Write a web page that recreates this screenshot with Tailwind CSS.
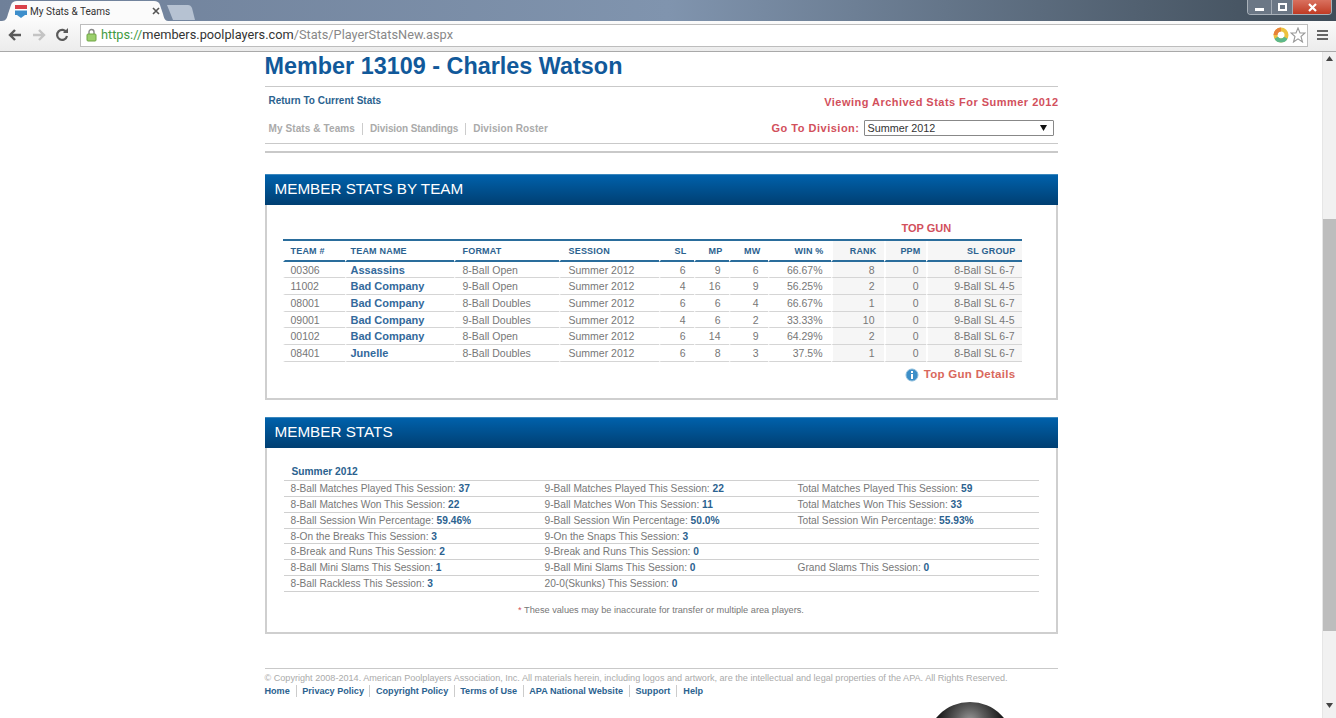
<!DOCTYPE html>
<html lang="en">
<head>
  <meta charset="UTF-8">
  <script src="https://cdn.jsdelivr.net/npm/@tailwindcss/browser@4"></script>
  <title>My Stats &amp; Teams</title>
</head>
<body class="h-[718px] overflow-hidden bg-white font-['Liberation_Sans',Arial,sans-serif]">
  <!-- browser chrome -->
  <div class="h-[21px] flex items-end bg-gradient-to-r from-[#6f8099] via-[#8094ae] to-[#3f4c58] relative">
    <div class="relative w-[166px] h-[20px] ml-[2px] flex items-center pl-[12px]">
      <svg class="absolute inset-0" width="166" height="20" viewBox="0 0 166 20"><path d="M0 20 C4 20 5 17 6 13 L9 4 C10 1 12 0 15 0 L152 0 C155 0 157 1 158 4 L161 13 C162 17 163 20 166 20 Z" fill="#fbfbfb"/></svg>
      <svg class="relative" width="14" height="14" viewBox="0 0 14 14"><rect x="1" y="1" width="12" height="5" fill="#d9414a"/><rect x="1" y="6" width="12" height="5" fill="#3d8ecb"/><path d="M3 11 H11 L7 14Z" fill="#3d8ecb"/><rect x="1" y="5" width="12" height="1.5" fill="#fff"/></svg>
      <span class="relative ml-[2px] text-[10px] text-[#333] font-['Roboto',sans-serif] w-[122px]">My Stats &amp; Teams</span>
      <svg class="relative" width="8" height="8" viewBox="0 0 8 8"><path d="M1 1L7 7M7 1L1 7" stroke="#555" stroke-width="1.6"/></svg>
    </div>
    <svg class="-ml-[1px] mb-[1px]" width="30" height="15" viewBox="0 0 30 15"><path d="M0 0 H21 C23 0 24 1 25 3 L28 15 H6 Z" fill="#b6c2d2"/></svg>
    <div class="absolute top-0 right-[4px] w-[85px] h-[15px] flex rounded-b-[4px] overflow-hidden border border-t-0 border-[#d5dbe0]/70">
      <div class="w-[24px] bg-[#6b7785] flex items-center justify-center border-r border-[#c8ced4]/60"><div class="w-[9px] h-[3px] mt-[5px] bg-white"></div></div>
      <div class="w-[21px] bg-[#6b7785] flex items-center justify-center border-r border-[#c8ced4]/60"><div class="w-[9px] h-[8px] border-2 border-white"></div></div>
      <div class="flex-1 bg-gradient-to-b from-[#d9705e] to-[#c03a22] flex items-center justify-center"><svg width="9" height="9" viewBox="0 0 9 9"><path d="M1 1L8 8M8 1L1 8" stroke="#fff" stroke-width="2.2"/></svg></div>
    </div>
  </div>
  <div class="h-[31px] flex items-center bg-gradient-to-b from-[#fafafa] to-[#ececec] border-b border-[#a9a9a9] pb-[2px]">
    <div class="w-[80px] flex items-center shrink-0">
      <svg class="ml-[8px]" width="14" height="12" viewBox="0 0 14 12"><path d="M7 1L2 6L7 11M2 6H13" fill="none" stroke="#5a5a5a" stroke-width="2.4"/></svg>
      <svg class="ml-[10px]" width="14" height="12" viewBox="0 0 14 12"><path d="M7 1L12 6L7 11M12 6H1" fill="none" stroke="#c4c4c4" stroke-width="2.4"/></svg>
      <svg class="ml-[9px]" width="14" height="14" viewBox="0 0 14 14"><path d="M11.5 4.5A5 5 0 1 0 12 8" fill="none" stroke="#5a5a5a" stroke-width="2.2"/><path d="M8 5H13V0Z" fill="#5a5a5a"/></svg>
    </div>
    <div class="w-[1228px] h-[23px] bg-white border border-[#bdbdbd] flex items-center pl-[5px] pr-[1px] shrink-0">
      <svg width="11" height="14" viewBox="0 0 11 14"><path d="M3 6V4A2.5 2.5 0 0 1 8 4V6" fill="none" stroke="#888" stroke-width="1.4"/><rect x="1" y="6" width="9" height="7" rx="1" fill="#9bcf6d" stroke="#6fa544"/></svg>
      <span class="ml-[4px] text-[12.75px] font-['Roboto',sans-serif] text-[#888] whitespace-nowrap"><span class="text-[#3f9b3f]">https://</span><span class="text-[#333]">members.poolplayers.com</span>/Stats/PlayerStatsNew.aspx</span>
      <svg class="ml-auto" width="16" height="16" viewBox="0 0 16 16"><circle cx="8" cy="8" r="5.5" fill="none" stroke="#ecc23f" stroke-width="4"/><path d="M3.2 10.8A5.5 5.5 0 0 0 12.8 10.8" fill="none" stroke="#5cb88a" stroke-width="4"/><path d="M2.5 8A5.5 5.5 0 0 1 8 2.5" fill="none" stroke="#e8823a" stroke-width="4"/></svg>
      <svg class="ml-[1px]" width="16" height="16" viewBox="0 0 16 16"><path d="M8 1L10 6H15L11 9.5L12.5 15L8 11.8L3.5 15L5 9.5L1 6H6Z" fill="#fff" stroke="#999" stroke-width="1.1"/></svg>
    </div>
    <div class="ml-[9px] w-[11px] flex flex-col gap-[2px]"><div class="h-[2px] bg-[#666]"></div><div class="h-[2px] bg-[#666]"></div><div class="h-[2px] bg-[#666]"></div></div>
  </div>

  <div class="flex h-[666px]">
    <main class="flex-1 overflow-hidden">
      <div class="w-[793px] mx-auto">
        <h1 class="text-[23.4px] leading-[28px] font-bold text-[#11599a]">Member 13109 - Charles Watson</h1>
        <div class="mt-[6px] border-t border-[#c9c9c9] h-[57px] flex justify-between">
          <div class="pl-[4px]">
            <a class="block mt-[8px] text-[10px] leading-[12px] font-bold text-[#2b628f]">Return To Current Stats</a>
            <div class="mt-[16px] flex text-[10px] leading-[12px] font-bold text-[#aaa] tracking-[0.1px]">
              <span class="pr-[7px] border-r border-[#ccc]">My Stats &amp; Teams</span>
              <span class="px-[7px] border-r border-[#ccc] tracking-[-0.1px]">Division Standings</span>
              <span class="px-[7px]">Division Roster</span>
            </div>
          </div>
          <div class="flex flex-col items-end -mr-[1px]">
            <p class="mt-[8px] text-[11px] leading-[14px] font-bold text-[#d2505c] tracking-[0.47px]">Viewing Archived Stats For Summer 2012</p>
            <div class="mt-[11px] mr-[5px] flex items-center">
              <span class="text-[11px] font-bold text-[#d2505c] tracking-[0.5px]">Go To Division:</span>
              <div class="ml-[4px] w-[190px] h-[16px] border border-[#888] rounded-[1px] flex items-center justify-between pl-[3px] pr-[6px] text-[10.8px] text-[#333]">Summer 2012<svg width="7" height="6" viewBox="0 0 7 6"><path d="M0 0H7L3.5 6Z" fill="#111"/></svg></div>
            </div>
          </div>
        </div>
        <div class="h-[10px] border-t border-b-2 border-t-[#c9c9c9] border-b-[#c9c9c9]"></div>

        <!-- member stats by team -->
        <section class="mt-[21px] h-[226px] border-2 border-t-0 border-[#cfcfcf]">
          <h2 class="-mx-[2px] h-[31px] flex items-center pl-[10px] pb-[2px] bg-gradient-to-b from-[#0061ab] to-[#003f72] border-t border-[#3a87bd] text-[15.25px] text-white">MEMBER STATS BY TEAM</h2>
          <p class="mt-[17px] pl-[635px] text-[11px] leading-[13px] font-bold text-[#d2505c]">TOP GUN</p>
          <table class="mt-[4px] ml-[16px] w-[739px] table-fixed border-t-2 border-[#2a6d9c] border-separate border-spacing-0 text-[10.5px] leading-[14px] text-[#777]">
            <colgroup><col class="w-[62px]"><col class="w-[109px]"><col class="w-[105px]"><col class="w-[100px]"><col class="w-[35px]"><col class="w-[35px]"><col class="w-[39px]"><col class="w-[63px]"><col class="w-[53px]"><col class="w-[42px]"><col class="w-[96px]"></colgroup>
            <thead class="text-[9px] font-bold text-[#2b628f] tracking-[0.2px] [&_th]:border-b-2 [&_th]:border-[#2a6d9c] [&_th]:border-l-2 [&_th]:border-l-white [&_th:nth-child(-n+4)]:text-left [&_th:nth-child(n+5)]:text-right [&_th:nth-child(n+9)]:bg-[#f6f6f6] [&_th:nth-child(1)]:pl-[6px] [&_th:nth-child(2)]:pl-[4px] [&_th:nth-child(3)]:pl-[7px] [&_th:nth-child(4)]:pl-[8px] [&_th:nth-child(5)]:pr-[7px] [&_th:nth-child(6)]:pr-[6px] [&_th:nth-child(7)]:pr-[7px] [&_th:nth-child(8)]:pr-[7px] [&_th:nth-child(9)]:pr-[7px] [&_th:nth-child(10)]:pr-[5px] [&_th:nth-child(11)]:pr-[6px]">
              <tr class="h-[21px]"><th>TEAM #</th><th>TEAM NAME</th><th>FORMAT</th><th>SESSION</th><th>SL</th><th>MP</th><th>MW</th><th>WIN %</th><th>RANK</th><th>PPM</th><th>SL GROUP</th></tr>
            </thead>
            <tbody class="[&_td]:border-b [&_td]:border-[#d5d5d5] [&_td]:border-l-2 [&_td]:border-l-white [&_td:nth-child(n+5)]:text-right [&_td:nth-child(n+9)]:bg-[#f6f6f6] [&_td:nth-child(1)]:pl-[6px] [&_td:nth-child(2)]:pl-[4px] [&_td:nth-child(2)]:text-[11px] [&_td:nth-child(2)]:font-bold [&_td:nth-child(2)]:text-[#33699b] [&_td:nth-child(3)]:pl-[7px] [&_td:nth-child(4)]:pl-[8px] [&_td:nth-child(5)]:pr-[8px] [&_td:nth-child(6)]:pr-[8px] [&_td:nth-child(7)]:pr-[9px] [&_td:nth-child(8)]:pr-[8px] [&_td:nth-child(9)]:pr-[9px] [&_td:nth-child(10)]:pr-[7px] [&_td:nth-child(11)]:pr-[7px]">
              <tr class="h-[16px]"><td>00306</td><td>Assassins</td><td>8-Ball Open</td><td>Summer 2012</td><td>6</td><td>9</td><td>6</td><td>66.67%</td><td>8</td><td>0</td><td>8-Ball SL 6-7</td></tr>
              <tr class="h-[17px]"><td>11002</td><td>Bad Company</td><td>9-Ball Open</td><td>Summer 2012</td><td>4</td><td>16</td><td>9</td><td>56.25%</td><td>2</td><td>0</td><td>9-Ball SL 4-5</td></tr>
              <tr class="h-[17px]"><td>08001</td><td>Bad Company</td><td>8-Ball Doubles</td><td>Summer 2012</td><td>6</td><td>6</td><td>4</td><td>66.67%</td><td>1</td><td>0</td><td>8-Ball SL 6-7</td></tr>
              <tr class="h-[16px]"><td>09001</td><td>Bad Company</td><td>9-Ball Doubles</td><td>Summer 2012</td><td>4</td><td>6</td><td>2</td><td>33.33%</td><td>10</td><td>0</td><td>9-Ball SL 4-5</td></tr>
              <tr class="h-[17px]"><td>00102</td><td>Bad Company</td><td>8-Ball Open</td><td>Summer 2012</td><td>6</td><td>14</td><td>9</td><td>64.29%</td><td>2</td><td>0</td><td>8-Ball SL 6-7</td></tr>
              <tr class="h-[17px]"><td>08401</td><td>Junelle</td><td>8-Ball Doubles</td><td>Summer 2012</td><td>6</td><td>8</td><td>3</td><td>37.5%</td><td>1</td><td>0</td><td>8-Ball SL 6-7</td></tr>
            </tbody>
          </table>
          <div class="mt-[4px] mr-[40px] flex justify-end items-center">
            <svg width="14" height="14" viewBox="0 0 14 14"><circle cx="7" cy="7" r="6" fill="#3d8fc8" stroke="#8bbcdc"/><rect x="6" y="6" width="2" height="5" fill="#fff"/><rect x="6" y="3" width="2" height="2" fill="#fff"/></svg>
            <span class="ml-[5px] text-[11.5px] font-bold text-[#d9685c] tracking-[0.3px]">Top Gun Details</span>
          </div>
        </section>

        <!-- member stats -->
        <section class="mt-[17px] h-[217px] border-2 border-t-0 border-[#cfcfcf]">
          <h2 class="-mx-[2px] h-[31px] flex items-center pl-[10px] pb-[2px] bg-gradient-to-b from-[#0061ab] to-[#003f72] border-t border-[#3a87bd] text-[15.25px] text-white">MEMBER STATS</h2>
          <div class="mx-[17px] mt-[17px] text-[10.2px] text-[#777]">
            <p class="pl-[8px] mb-[1px] text-[10.2px] leading-[14px] font-bold text-[#2b628f]">Summer 2012</p>
            <div class="grid grid-cols-[254px_253px_1fr] border-t border-[#d0d0d0] [&>div]:h-[15.85px] [&>div]:leading-[15px] [&>div]:border-b [&>div]:border-[#d0d0d0] [&>div]:pl-[7px] [&_b]:text-[#2b628f]">
              <div>8-Ball Matches Played This Session: <b>37</b></div><div>9-Ball Matches Played This Session: <b>22</b></div><div>Total Matches Played This Session: <b>59</b></div>
              <div>8-Ball Matches Won This Session: <b>22</b></div><div>9-Ball Matches Won This Session: <b>11</b></div><div>Total Matches Won This Session: <b>33</b></div>
              <div>8-Ball Session Win Percentage: <b>59.46%</b></div><div>9-Ball Session Win Percentage: <b>50.0%</b></div><div>Total Session Win Percentage: <b>55.93%</b></div>
              <div>8-On the Breaks This Session: <b>3</b></div><div>9-On the Snaps This Session: <b>3</b></div><div></div>
              <div>8-Break and Runs This Session: <b>2</b></div><div>9-Break and Runs This Session: <b>0</b></div><div></div>
              <div>8-Ball Mini Slams This Session: <b>1</b></div><div>9-Ball Mini Slams This Session: <b>0</b></div><div>Grand Slams This Session: <b>0</b></div>
              <div>8-Ball Rackless This Session: <b>3</b></div><div>20-0(Skunks) This Session: <b>0</b></div><div></div>
            </div>
            <p class="mt-[12px] text-center text-[9.2px] leading-[12px] text-[#777]"><span class="text-[#d2505c]">*</span> These values may be inaccurate for transfer or multiple area players.</p>
          </div>
        </section>

        <footer class="mt-[34px] border-t border-[#c9c9c9]">
          <p class="mt-[4px] text-[9.1px] leading-[11px] text-[#aaa] whitespace-nowrap">© Copyright 2008-2014. American Poolplayers Association, Inc. All materials herein, including logos and artwork, are the intellectual and legal properties of the APA. All Rights Reserved.</p>
          <div class="mt-[1px] flex text-[9.1px] leading-[12px] font-bold text-[#2b628f]">
            <a class="pr-[6px] border-r border-[#ccc]">Home</a><a class="px-[5.5px] border-r border-[#ccc]">Privacy Policy</a><a class="px-[5.5px] border-r border-[#ccc]">Copyright Policy</a><a class="px-[5.5px] border-r border-[#ccc]">Terms of Use</a><a class="px-[5.5px] border-r border-[#ccc]">APA National Website</a><a class="px-[6px] border-r border-[#ccc]">Support</a><a class="px-[6px]">Help</a>
          </div>
          <div class="mt-[5px] ml-[661px] w-[88px] h-[88px] rounded-full bg-[radial-gradient(circle_at_50%_22%,#9a9a9a,#5a5a5a_18%,#111_42%)]"></div>
        </footer>
      </div>
    </main>
    <!-- scrollbar -->
    <div class="w-[14px] shrink-0 bg-[#f1f1f1] flex flex-col items-center border-l border-[#e6e6e6]">
      <svg class="mt-[4px]" width="7" height="5" viewBox="0 0 7 5"><path d="M0 5H7L3.5 0Z" fill="#444"/></svg>
      <div class="mt-[158px] w-full h-[412px] bg-[#bdbdbd]"></div>
      <svg class="mt-[72px]" width="7" height="5" viewBox="0 0 7 5"><path d="M0 0H7L3.5 5Z" fill="#444"/></svg>
    </div>
  </div>
</body>
</html>
